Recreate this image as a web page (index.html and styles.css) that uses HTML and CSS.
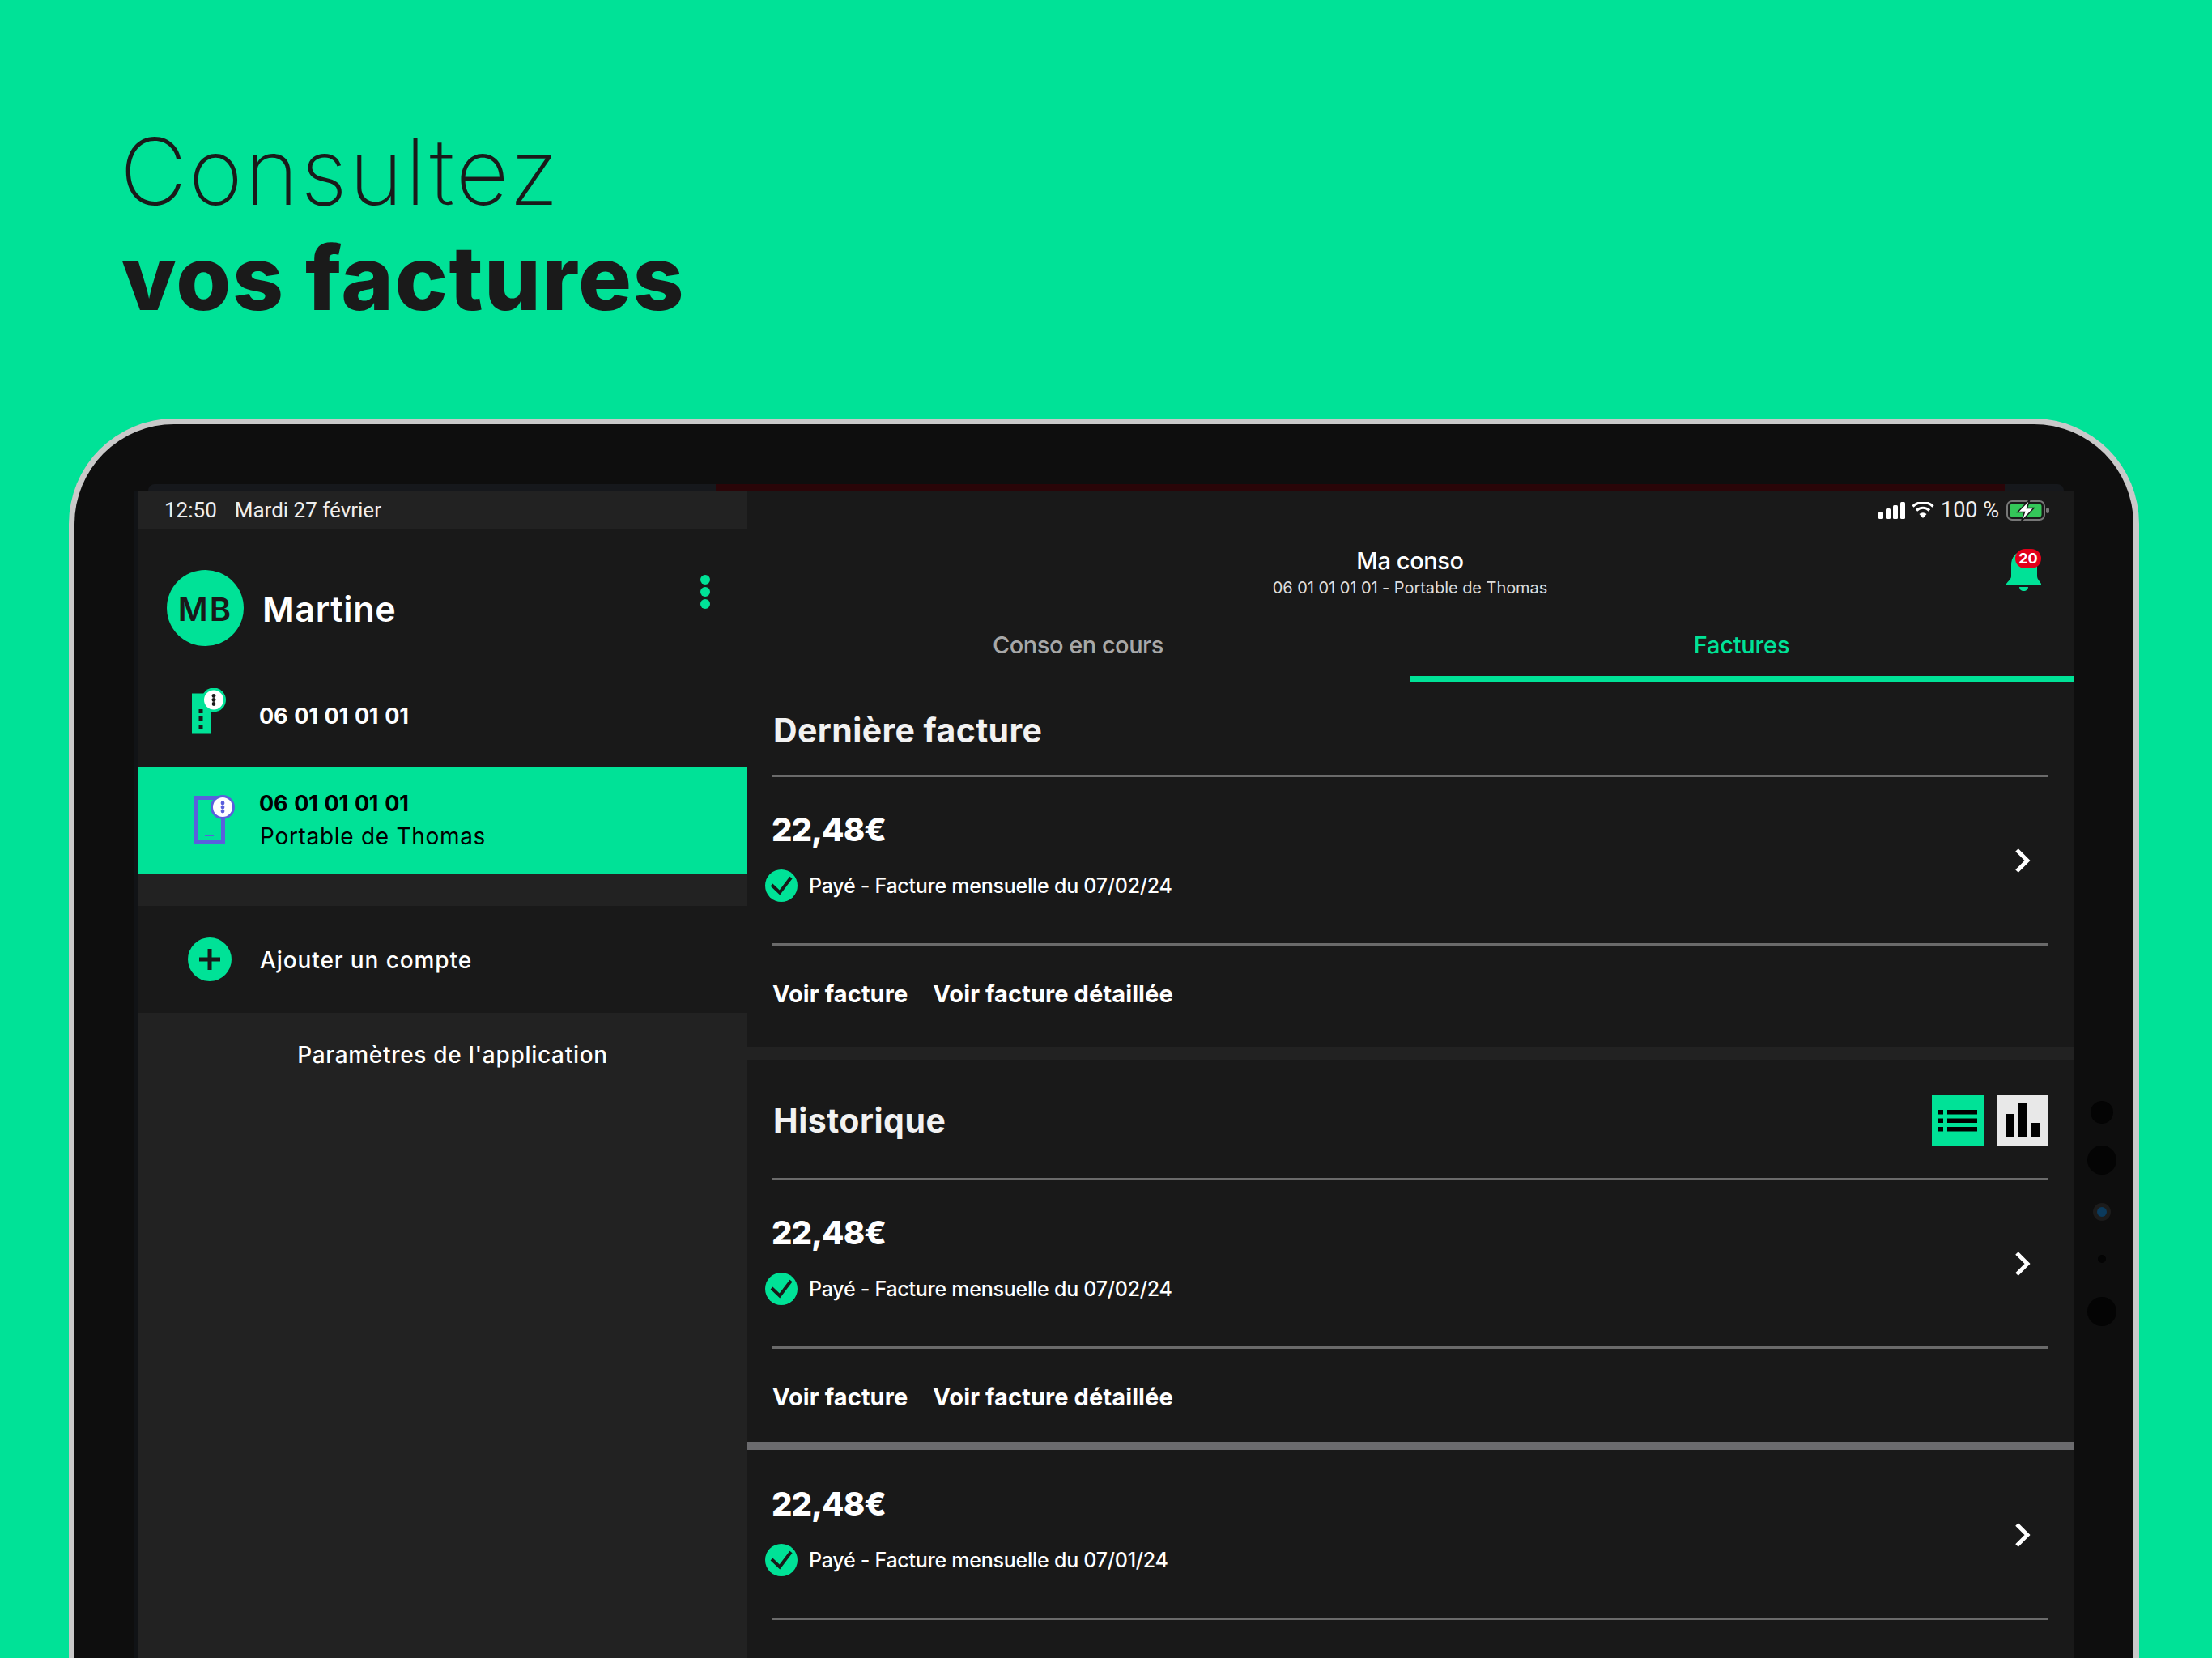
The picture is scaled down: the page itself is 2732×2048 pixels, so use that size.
FILE: index.html
```html
<!DOCTYPE html>
<html lang="fr">
<head>
<meta charset="utf-8">
<title>Consultez vos factures</title>
<link rel="stylesheet" href="styles.css">
</head>
<body>
<div class="page">
  <header class="headline">
    <div class="headline-light">Consultez</div>
    <div class="headline-bold">vos factures</div>
  </header>
  <div class="device">
    <div class="screen">
      <div class="notch-strip"><div class="notch-red"></div></div>
      <div class="app">
        <aside class="sidebar">
          <div class="status-left"><span>12:50</span><span>Mardi 27 février</span></div>
          <div class="profile">
            <div class="avatar">MB</div>
            <div class="profile-name">Martine</div>
            <div class="kebab"><i></i><i></i><i></i></div>
          </div>
          <div class="account">
            <svg class="acc-icon" viewBox="0 0 60 70"><rect x="2" y="6.5" width="23" height="50" fill="#00e297"/><rect x="10.5" y="26" width="5" height="5" fill="#191919"/><rect x="10.5" y="35" width="5" height="5" fill="#191919"/><rect x="10.5" y="45" width="5" height="5" fill="#191919"/><circle cx="29" cy="14.5" r="15" fill="#00e297"/><circle cx="29" cy="14.5" r="12" fill="#fff"/><circle cx="29" cy="9.5" r="2.4" fill="#191919"/><circle cx="29" cy="14.5" r="2.4" fill="#191919"/><circle cx="29" cy="19.5" r="2.4" fill="#191919"/></svg>
            <div class="acc-text"><div class="acc-num">06 01 01 01 01</div></div>
          </div>
          <div class="account account-active">
            <svg class="acc-icon" viewBox="0 0 60 70"><rect x="7.5" y="7.5" width="33" height="54" fill="none" stroke="#5a5fdc" stroke-width="5"/><rect x="18" y="53" width="11" height="2" fill="#5a5fdc"/><circle cx="40" cy="19" r="15" fill="#5a5fdc"/><circle cx="40" cy="19" r="12" fill="#fff"/><circle cx="40" cy="14" r="2.4" fill="#5a5fdc"/><circle cx="40" cy="19" r="2.4" fill="#5a5fdc"/><circle cx="40" cy="24" r="2.4" fill="#5a5fdc"/></svg>
            <div class="acc-text"><div class="acc-num">06 01 01 01 01</div><div class="acc-label">Portable de Thomas</div></div>
          </div>
          <div class="add-account">
            <svg class="add-icon" viewBox="0 0 54 54"><circle cx="27" cy="27" r="27" fill="#00e297"/><path d="M27 14V40M14 27H40" stroke="#191919" stroke-width="5"/></svg>
            <span class="add-label">Ajouter un compte</span>
          </div>
          <div class="settings">Paramètres de l'application</div>
        </aside>
        <main class="main">
          <div class="status-right">
            <svg class="sig" viewBox="0 0 33 21"><rect x="0" y="12" width="6" height="9" rx="1.5" fill="#fff"/><rect x="9" y="8" width="6" height="13" rx="1.5" fill="#fff"/><rect x="18" y="4" width="6" height="17" rx="1.5" fill="#fff"/><rect x="27" y="0" width="6" height="21" rx="1.5" fill="#fff"/></svg>
            <svg class="wifi" viewBox="0 0 28 20"><path d="M14 20l-4.5-5a6.5 6.5 0 0 1 9 0z" fill="#fff"/><path d="M6 10.5a11.5 11.5 0 0 1 16 0M1.500 5.500a18 18 0 0 1 25 0" fill="none" stroke="#fff" stroke-width="3.200"/></svg>
            <span class="pct">100 %</span>
            <svg class="batt" viewBox="0 0 53 27"><rect x="1" y="2" width="46" height="23" rx="6" fill="none" stroke="#777" stroke-width="2"/><rect x="4.500" y="5.500" width="39" height="16" rx="3" fill="#34c759"/><rect x="49" y="10" width="4" height="7" rx="2" fill="#777"/><path d="M29 0L14 15.500H22.500L18.500 27L34 10.500H25.500Z" fill="#fff" stroke="#191919" stroke-width="1.500"/></svg>
          </div>
          <div class="titlebar">
            <div class="title-spacer"></div>
            <div class="title-block">
              <div class="title-main">Ma conso</div>
              <div class="title-sub">06 01 01 01 01 - Portable de Thomas</div>
            </div>
            <div class="bell">
              <svg class="bell-svg" viewBox="0 0 43 52"><path d="M21.500 3C11 3 6 11 6 20V34C6 37 2 40 0 43V45H43V43C41 40 38 37 38 34V20C38 11 32 3 21.500 3Z" fill="#00e297"/><path d="M16 47H27C27 50 24.500 52 21.500 52C18.500 52 16 50 16 47Z" fill="#00e297"/></svg>
              <span class="badge">20</span>
            </div>
          </div>
          <div class="tabs">
            <div class="tab">Conso en cours</div>
            <div class="tab tab-active">Factures</div>
          </div>
          <section class="section">
            <h2 class="sec-title sec-title-first">Dernière facture</h2>
            <div class="bill">
              <div class="bill-info">
                <div class="price">22,48€</div>
                <div class="paid">
                  <svg class="check" viewBox="0 0 40 40"><circle cx="20" cy="20" r="20" fill="#00e297"/><path d="M8 19L18 28.500L32 10" fill="none" stroke="#191919" stroke-width="4"/></svg>
                  <span>Payé - Facture mensuelle du 07/02/24</span>
                </div>
              </div>
              <svg class="chev" viewBox="0 0 20 32"><path d="M3 3L16 16L3 29" fill="none" stroke="#fff" stroke-width="5"/></svg>
            </div>
            <div class="links"><span>Voir facture</span><span>Voir facture détaillée</span></div>
          </section>
          <div class="gap"></div>
          <section class="section">
            <div class="sec-title sec-title-tools">
              <h2 class="sec-h">Historique</h2>
              <div class="views">
                <svg class="view" viewBox="0 0 64 64"><rect width="64" height="64" fill="#00e297"/><path d="M8 19h6v5.500H8zM8 29.500h6V35H8zM8 40h6v5.500H8zM19 19h37v5.500H19zM19 29.500h37V35H19zM19 40h37v5.500H19z" fill="#000"/></svg>
                <svg class="view" viewBox="0 0 64 64"><rect width="64" height="64" fill="#e8e8e8"/><path d="M11 24h11v29H11zM27 11h11v42H27zM43 35h11v18H43z" fill="#000"/></svg>
              </div>
            </div>
            <div class="bill">
              <div class="bill-info">
                <div class="price">22,48€</div>
                <div class="paid">
                  <svg class="check" viewBox="0 0 40 40"><circle cx="20" cy="20" r="20" fill="#00e297"/><path d="M8 19L18 28.500L32 10" fill="none" stroke="#191919" stroke-width="4"/></svg>
                  <span>Payé - Facture mensuelle du 07/02/24</span>
                </div>
              </div>
              <svg class="chev" viewBox="0 0 20 32"><path d="M3 3L16 16L3 29" fill="none" stroke="#fff" stroke-width="5"/></svg>
            </div>
            <div class="links links-short"><span>Voir facture</span><span>Voir facture détaillée</span></div>
          </section>
          <div class="thick"></div>
          <section class="section">
            <div class="bill">
              <div class="bill-info">
                <div class="price">22,48€</div>
                <div class="paid">
                  <svg class="check" viewBox="0 0 40 40"><circle cx="20" cy="20" r="20" fill="#00e297"/><path d="M8 19L18 28.500L32 10" fill="none" stroke="#191919" stroke-width="4"/></svg>
                  <span>Payé - Facture mensuelle du 07/01/24</span>
                </div>
              </div>
              <svg class="chev" viewBox="0 0 20 32"><path d="M3 3L16 16L3 29" fill="none" stroke="#fff" stroke-width="5"/></svg>
            </div>
          </section>
        </main>
      </div>
    </div>
    <div class="sensors">
      <i class="s s-m"></i>
      <i class="s s-l"></i>
      <i class="cam"><b></b></i>
      <i class="s s-xs"></i>
      <i class="s s-l"></i>
    </div>
  </div>
</div>
</body>
</html>
```
FILE: styles.css
```css
* { box-sizing: border-box; }
html, body { margin: 0; padding: 0; }
body { font-family: Inter, "Liberation Sans", sans-serif; color: #fff; }
.page { width: 2732px; height: 2048px; overflow: hidden; background: #00e297; }

.headline { height: 517px; padding: 152px 0 0 146px; color: #1a1a1a; }
.headline-light { font-size: 114px; line-height: 120px; font-weight: 250; letter-spacing: 2.300px; margin-left: 2px; }
.headline-bold { font-size: 110px; line-height: 130px; font-weight: 800; letter-spacing: 1.500px; margin-top: 6px; margin-left: 4px; }

.device { display: flex; width: 2557px; height: 1540px; margin-left: 85px; padding: 74px 0 0 79px; background: #0e0e0e; border: 7px solid #c9c9c9; border-bottom: 0; border-radius: 130px 130px 0 0; }
.screen { width: 2390px; flex: none; }
.notch-strip { height: 8px; background: #16181c; margin-left: 12px; border-radius: 22px 22px 0 0; margin-right: 12px; padding-left: 701px; padding-right: 73px; }
.notch-red { height: 8px; background: #2a0508; }
.app { display: flex; height: 1500px; box-shadow: -6px 0 0 #111316, 1px 0 0 #1f1315; }

.sidebar { width: 751px; flex: none; background: #222; }
.status-left { height: 48px; display: flex; align-items: center; gap: 22px; padding-left: 32px; font-family: Roboto, sans-serif; font-size: 26px; color: #eee; }
.profile { height: 168px; background: #191919; display: flex; align-items: flex-start; padding: 50px 0 0 35px; }
.avatar { width: 95px; height: 94px; padding-top: 2px; border-radius: 50%; background: #00e297; color: #191919; display: flex; align-items: center; justify-content: center; font-size: 40px; font-weight: 600; letter-spacing: 2px; }
.profile-name { font-size: 43px; line-height: 96px; font-weight: 600; margin-left: 23px; letter-spacing: 0.700px; }
.kebab { margin-left: 376px; margin-top: 6px; display: flex; flex-direction: column; gap: 3px; }
.kebab i { display: block; width: 12px; height: 12px; border-radius: 50%; background: #00e297; }
.account { height: 125px; background: #191919; display: flex; align-items: center; padding-left: 64px; gap: 25px; }
.account-active { height: 132px; background: #00e297; color: #000; }
.acc-icon { width: 60px; height: 70px; flex: none; }
.acc-num { font-size: 27px; line-height: 40px; font-weight: 700; letter-spacing: -0.300px; word-spacing: 2px; }
.acc-label { font-size: 28px; line-height: 40px; font-weight: 400; letter-spacing: 0.700px; margin-left: 1px; }
.add-account { height: 132px; margin-top: 40px; background: #191919; display: flex; align-items: center; padding-left: 61px; gap: 35px; font-size: 28px; font-weight: 500; letter-spacing: 0.900px; }
.add-label { padding-top: 2px; }
.add-icon { width: 54px; height: 54px; flex: none; }
.settings { height: 104px; line-height: 104px; text-align: center; padding-left: 25px; font-size: 28px; font-weight: 500; letter-spacing: 0.700px; }

.main { width: 1639px; flex: none; background: #191919; }
.status-right { height: 48px; display: flex; align-items: center; justify-content: flex-end; padding-right: 30px; }
.sig { width: 33px; height: 21px; margin-right: 8px; }
.wifi { width: 28px; height: 20px; margin-right: 9px; }
.pct { font-family: Roboto, sans-serif; font-size: 27px; margin-right: 9px; margin-left: -1px; color: #eee; }
.batt { width: 53px; height: 27px; }

.titlebar { height: 103px; display: grid; grid-template-columns: 1fr auto 1fr; padding: 0 40px; }
.title-block { text-align: center; padding-top: 21px; }
.title-main { font-size: 29px; line-height: 36px; font-weight: 500; letter-spacing: -0.400px; }
.title-sub { font-size: 20px; line-height: 30px; color: #ddd; letter-spacing: -0.050px; }
.bell { justify-self: end; width: 43px; height: 52px; margin-top: 24px; position: relative; }
.bell-svg { display: block; width: 43px; height: 52px; }
.badge { position: absolute; left: 11px; top: 0; width: 32px; height: 24px; border-radius: 12px; background: #e2001a; color: #fff; font-size: 18px; line-height: 24px; font-weight: 700; text-align: center; }

.tabs { display: grid; grid-template-columns: 819px 820px; }
.tab { height: 86px; padding-bottom: 8px; display: flex; align-items: center; justify-content: center; font-size: 29px; font-weight: 500; color: #a8a8a8; letter-spacing: -0.500px; }
.tab-active { color: #00e297; border-bottom: 8px solid #00e297; padding-bottom: 0; letter-spacing: -0.200px; }

.sec-title { margin: 0 31px 0 32px; border-bottom: 3px solid #6a6a6a; font-size: 41px; font-weight: 700; color: #f2f2f2; letter-spacing: 0.400px; }
.sec-title-first { height: 117px; line-height: 118px; padding-left: 1px; }
.sec-title-tools { height: 149px; padding-left: 1px; display: flex; align-items: center; justify-content: space-between; }
.sec-h { margin: 0; font: inherit; letter-spacing: 0.500px; padding-top: 3px; }
.views { display: flex; gap: 16px; margin-top: 3px; }
.view { display: block; width: 64px; height: 64px; }

.bill { height: 208px; margin: 0 31px 0 32px; border-bottom: 3px solid #6a6a6a; display: flex; align-items: center; justify-content: space-between; padding: 0 22px 0 0; }
.bill-info { align-self: flex-start; padding-top: 41px; margin-left: -1px; }
.price { font-size: 40px; line-height: 48px; font-weight: 800; letter-spacing: -1px; }
.paid { display: flex; align-items: center; gap: 14px; margin-top: 25px; margin-left: -8px; font-size: 25px; line-height: 40px; font-weight: 500; letter-spacing: -0.250px; }
.check { width: 40px; height: 40px; flex: none; }
.chev { width: 20px; height: 32px; flex: none; }

.links { height: 125px; margin: 0 32px; padding: 0 0 7px 0; display: flex; align-items: center; gap: 31px; font-size: 29px; font-weight: 700; letter-spacing: 0.100px; }
.links-short { height: 115px; padding: 3px 0 0 0; }
.gap { height: 16px; background: #222; }
.thick { height: 10px; background: #6b6b6e; margin-bottom: 2px; }

.sensors { flex: 1; display: flex; flex-direction: column; align-items: center; padding-top: 762px; padding-right: 4px; }
.s { display: block; border-radius: 50%; background: #040404; }
.s-m { width: 28px; height: 28px; }
.s-l { width: 36px; height: 36px; margin-top: 27px; }
.s-xs { width: 10px; height: 10px; margin-top: 42px; }
.s-xs + .s-l { margin-top: 42px; }
.cam { display: flex; align-items: center; justify-content: center; width: 22px; height: 22px; margin-top: 35px; border-radius: 50%; background: #1c1c1c; }
.cam b { display: block; width: 12px; height: 12px; border-radius: 50%; background: #0b3a5c; }
```
